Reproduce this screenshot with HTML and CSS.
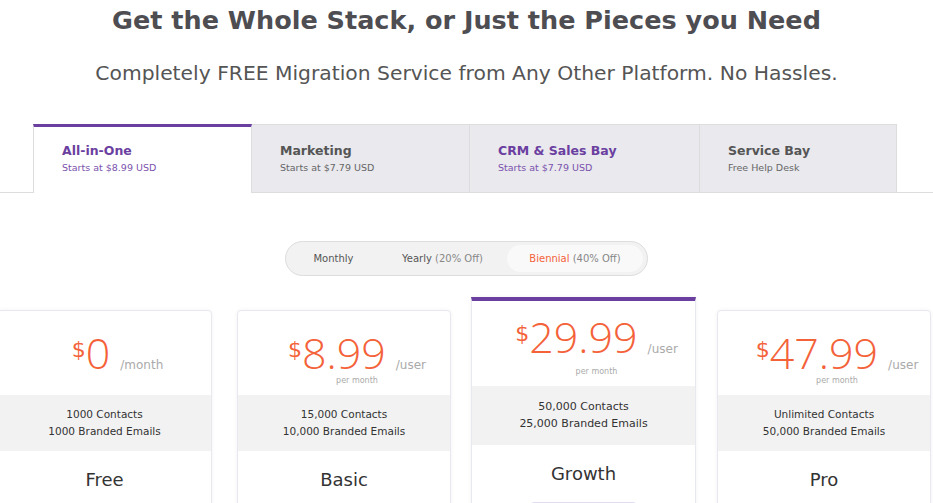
FILE: index.html
```html
<!DOCTYPE html>
<html lang="en">
<head>
    <meta charset="UTF-8">
    <meta name="viewport" content="width=device-width, initial-scale=1.0">
    <title>Pricing</title>
    <link rel="stylesheet" href="styles.css">
</head>
<body>
    <h1 class="title">Get the Whole Stack, or Just the Pieces you Need</h1>
    <p class="subtitle">Completely FREE Migration Service from Any Other Platform. No Hassles.</p>

    <div class="tabs">
        <div class="tab tab-active tab-1">
            <div class="tab-name purple">All-in-One</div>
            <div class="tab-sub purple">Starts at $8.99 USD</div>
        </div>
        <div class="tab tab-2">
            <div class="tab-name">Marketing</div>
            <div class="tab-sub">Starts at $7.79 USD</div>
        </div>
        <div class="tab tab-3">
            <div class="tab-name purple">CRM &amp; Sales Bay</div>
            <div class="tab-sub purple">Starts at $7.79 USD</div>
        </div>
        <div class="tab tab-4">
            <div class="tab-name">Service Bay</div>
            <div class="tab-sub">Free Help Desk</div>
        </div>
    </div>

    <div class="toggle-wrap">
        <div class="toggle">
            <div class="toggle-item item-monthly">Monthly</div>
            <div class="toggle-item item-yearly">Yearly <span class="off">(20% Off)</span></div>
            <div class="toggle-item item-biennial toggle-active"><span class="orange">Biennial</span> <span class="off">(40% Off)</span></div>
        </div>
    </div>

    <div class="plans">
        <div class="plan plan-first">
            <div class="plan-price">
                <div class="price-line"><sup>$</sup><span class="amount">0</span><span class="unit">/month</span></div>
            </div>
            <div class="plan-features">1000 Contacts<br>1000 Branded Emails</div>
            <div class="plan-name">Free</div>
        </div>
        <div class="plan">
            <div class="plan-price">
                <div class="price-line"><sup>$</sup><span class="amount">8.99</span><span class="unit">/user</span></div>
                <div class="per">per month</div>
            </div>
            <div class="plan-features">15,000 Contacts<br>10,000 Branded Emails</div>
            <div class="plan-name">Basic</div>
        </div>
        <div class="plan plan-featured">
            <div class="plan-price">
                <div class="price-line"><sup>$</sup><span class="amount">29.99</span><span class="unit">/user</span></div>
                <div class="per">per month</div>
            </div>
            <div class="plan-features">50,000 Contacts<br>25,000 Branded Emails</div>
            <div class="plan-name">Growth</div>
            <div class="plan-btn"></div>
        </div>
        <div class="plan plan-last">
            <div class="plan-price">
                <div class="price-line"><sup>$</sup><span class="amount">47.99</span><span class="unit">/user</span></div>
                <div class="per">per month</div>
            </div>
            <div class="plan-features">Unlimited Contacts<br>50,000 Branded Emails</div>
            <div class="plan-name">Pro</div>
        </div>
    </div>
</body>
</html>
```

FILE: styles.css
```css
body {
    margin: 0;
    font-family: "DejaVu Sans", "Open Sans", sans-serif;
    background-color: #fff;
    color: #333;
    overflow: hidden;
}
.title {
    margin: 4px 0 0;
    text-align: center;
    font-size: 25.5px;
    font-weight: bold;
    color: #4d4d52;
    line-height: 32px;
}
.subtitle {
    margin: 23px 0 0;
    text-align: center;
    font-size: 20.3px;
    color: #555;
    line-height: 28px;
}
.tabs {
    display: flex;
    margin-top: 37px;
    padding-left: 33px;
    border-bottom: 1px solid #ddd;
    height: 68px;
}
.tab {
    box-sizing: border-box;
    background-color: #e9e9ee;
    border: 1px solid #ddd;
    border-bottom: none;
    border-left: none;
    padding: 17px 0 0 28px;
}
.tab-1 { width: 219px; }
.tab-2 { width: 218px; }
.tab-3 { width: 230px; }
.tab-4 { width: 197px; }
.tab-active {
    background-color: #fff;
    border-top: 3px solid #6b3fa0;
    border-left: 1px solid #ddd;
    padding-top: 15px;
    height: 69px;
}
.tab-name {
    font-size: 12.5px;
    font-weight: 600;
    color: #555;
    line-height: 18px;
}
.tab-sub {
    font-size: 9.5px;
    color: #666;
    line-height: 16px;
}
.purple {
    color: #6b3fa0;
}
.tab-sub.purple {
    color: #7b52ad;
}
.toggle-wrap {
    display: flex;
    justify-content: center;
    margin-top: 48px;
}
.toggle {
    display: flex;
    align-items: center;
    width: 363px;
    height: 35px;
    box-sizing: border-box;
    padding: 3px;
    background-color: #f2f2f2;
    border: 1px solid #ddd;
    border-radius: 18px;
}
.toggle-item {
    text-align: center;
    font-size: 10px;
    color: #555;
    line-height: 27px;
    border-radius: 14px;
}
.item-monthly { width: 89px; }
.item-yearly { width: 129px; }
.item-biennial { width: 136px; }
.toggle-active {
    background-color: #f9f9f9;
}
.off {
    color: #888;
}
.orange {
    color: #f4623a;
}
.plans {
    display: flex;
    align-items: flex-start;
    gap: 20px;
    margin: 21px 0 0 -3px;
}
.plan {
    flex: 0 0 214px;
    height: 240px;
    margin-top: 13px;
    box-sizing: border-box;
    background-color: #fff;
    border: 1px solid #e8e8f0;
    border-radius: 4px;
    box-shadow: 0 0 4px rgba(0, 0, 0, 0.05);
    text-align: center;
}
.plan-first {
    flex-basis: 215px;
    margin-right: 5px;
}
.plan-last {
    margin-left: 1px;
}
.plan-featured {
    flex-basis: 225px;
    margin-top: 0;
    border-top: 4px solid #6b3fa0;
    border-radius: 0;
}
.plan-price {
    height: 84px;
    padding-left: 26px;
    box-sizing: border-box;
    padding-top: 20px;
}
.plan-featured .plan-price {
    padding-top: 14px;
    height: 85px;
}
.price-line {
    color: #f4623a;
    line-height: 44px;
    white-space: nowrap;
}
.price-line sup {
    font-size: 22px;
    vertical-align: 12px;
    line-height: 0;
}
.amount {
    font-family: "Open Sans", sans-serif;
    font-size: 43px;
    font-weight: 300;
}
.unit {
    font-size: 12px;
    color: #aaa;
    margin-left: 10px;
}
.per {
    font-size: 8px;
    color: #aaa;
    line-height: 10px;
    margin-top: -11px;
}
.plan-featured .per {
    margin-top: -4px;
}
.plan-features {
    background-color: #f2f2f2;
    height: 56px;
    box-sizing: border-box;
    padding-top: 11px;
    font-size: 10.5px;
    line-height: 17px;
    color: #333;
}
.plan-featured .plan-features {
    height: 59px;
    padding-top: 12px;
    font-size: 11px;
}
.plan-name {
    font-size: 18px;
    color: #333;
    padding-top: 17px;
    line-height: 24px;
}
.plan-btn {
    width: 105px;
    height: 30px;
    margin: 16px auto 0;
    background-color: #e2dcf2;
    border-radius: 3px;
}
```
